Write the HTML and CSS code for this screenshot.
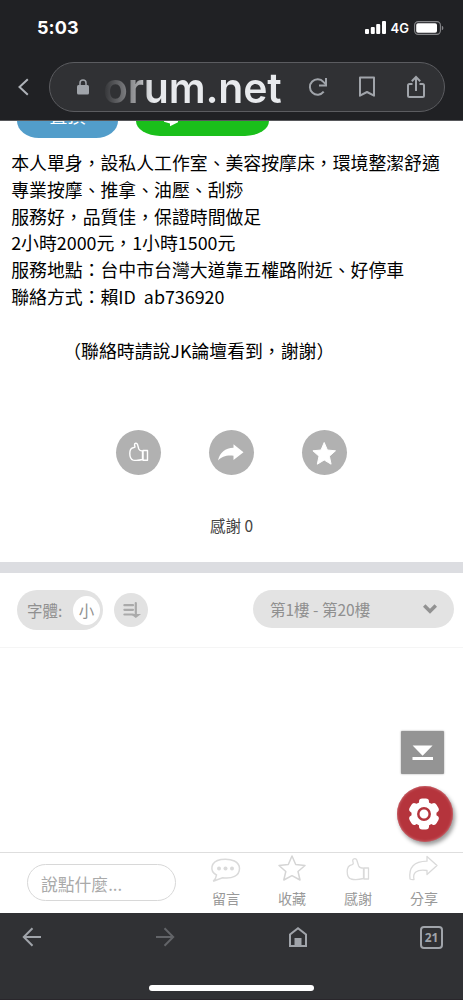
FILE: index.html
```html
<!DOCTYPE html>
<html lang="zh-Hant">
<head>
<meta charset="utf-8">
<meta name="viewport" content="width=device-width, initial-scale=1">
<title>JK論壇</title>
<link rel="stylesheet" href="styles.css">
</head>
<body>
<div class="phone">
  <header class="top">
    <div class="status">
      <span class="time">5:03</span>
      <svg class="signal" width="21" height="13" viewBox="0 0 21 13" fill="#fff"><rect x="0" y="8" width="4" height="5" rx="1"/><rect x="5.8" y="6" width="4" height="7" rx="1"/><rect x="11.2" y="3" width="4" height="10" rx="1"/><rect x="17" y="0" width="4" height="13" rx="1"/></svg>
      <span class="net">4G</span>
      <svg class="battery" width="30" height="14" viewBox="0 0 30 14"><rect x=".6" y=".6" width="25.8" height="12.8" rx="3.6" fill="none" stroke="#86878a" stroke-width="1.1"/><rect x="2.2" y="2.2" width="20.8" height="9.6" rx="1.8" fill="#fff"/><path d="M27.8 4.8q1.600.5 1.600 2.200t-1.600 2.200z" fill="#86878a"/></svg>
    </div>
    <div class="address-row">
      <svg class="chevron" width="12" height="18" viewBox="0 0 12 18"><path d="M9.800 1.200 1.500 9l8.300 7.800" fill="none" stroke="#aeb2b8" stroke-width="2"/></svg>
      <div class="address">
        <svg class="lock" width="12" height="16" viewBox="0 0 12 16"><rect x="0" y="6" width="12" height="9.600" rx="1.500" fill="#a0a4aa"/><path d="M3 7V4a3 3 0 0 1 6 0v3" fill="none" stroke="#a0a4aa" stroke-width="1.500"/></svg>
        <span class="host">orum.net</span>
        <svg class="reload" width="20" height="20" viewBox="0 0 20 20" fill="none" stroke="#a0a4aa" stroke-width="2"><path d="M15.700 14.700A7.700 7.700 0 1 1 15.400 4.900L17.800 7.200"/><path d="M18 1v7.500h-7"/></svg>
        <svg class="bookmark" width="18" height="22" viewBox="0 0 18 22"><path d="M2 1.500h14v18.200l-7-3.700-7 3.700z" fill="none" stroke="#a0a4aa" stroke-width="2" stroke-linejoin="round"/></svg>
        <svg class="share" width="18" height="24" viewBox="0 0 18 24" fill="none" stroke="#a0a4aa" stroke-width="2"><path d="M5.500 9H2.500Q1 9 1 10.500v10Q1 22 2.500 22h13q1.500 0 1.500-1.500v-10Q17 9 15.500 9h-3M9 16V2.500M4.800 6.200 9 2l4.200 4.200"/></svg>
      </div>
    </div>
  </header>

  <main class="page">
    <div class="buttons">
      <div class="btn blue"><span>置頂</span></div>
      <div class="btn green"><svg width="16" height="8" viewBox="0 0 16 8"><path d="M1 0h14v1.200L7 5.200V2.400L1 .8z" fill="#fff"/></svg></div>
    </div>
    <article class="post">
      <p>本人單身，設私人工作室、美容按摩床，環境整潔舒適</p>
      <p>專業按摩、推拿、油壓、刮痧</p>
      <p>服務好，品質佳，保證時間做足</p>
      <p>2小時2000元，1小時1500元</p>
      <p>服務地點：台中市台灣大道靠五權路附近、好停車</p>
      <p>聯絡方式：賴ID&nbsp; ab736920</p>
      <p>&nbsp;</p>
      <p class="note">（聯絡時請說JK論壇看到，謝謝）</p>
    </article>
    <div class="actions">
      <span class="round"><svg width="45" height="45" viewBox="0 0 45 45" fill="none" stroke="#fff" stroke-width="1.400" stroke-linejoin="round"><path d="M26.500 29.500c-4 1-7 1-9.300.6-3-.8-3.400-3-3.400-6.600 0-3.500.8-5.200 3.200-5.700l2-.8-.5-2c-.2-2.200 2.400-2.400 3-.6l1.300 4.600q.8 2 3.700 2z"/><path d="M27 20.500h4.500v9.700H27z"/></svg></span>
      <span class="round"><svg width="45" height="45" viewBox="0 0 45 45"><path d="M9 30.500C11 22.500 16 18 24.500 17.800V14.300L34.500 22.300 24.500 30V25.800C17 25 13 27 9 30.500z" fill="#fff"/></svg></span>
      <span class="round"><svg width="45" height="45" viewBox="0 0 45 45"><path d="m22.200 12.500 3.200 7.500 8.100.8-6.100 5.400 1.700 8-6.900-4.200-6.900 4.200 1.700-8-6.100-5.400 8.100-.8z" fill="#fff" stroke="#fff" stroke-linejoin="round"/></svg></span>
    </div>
    <div class="thanks">感謝 0</div>
    <div class="divider"></div>
    <div class="tools">
      <div class="font-size"><span>字體:</span><b>小</b></div>
      <div class="sort"><svg width="34" height="34" viewBox="0 0 34 34" stroke="#aaa" stroke-width="2.200" stroke-linecap="round" fill="none"><path d="M10.400 12.200h8.600M10.400 16.800h8.600M10.400 21.500h8.600M21.800 10v12"/><path d="M19.800 22.200h4l-2 1.500z"/></svg></div>
      <div class="range"><span>第1樓 - 第20樓</span><svg width="14" height="10" viewBox="0 0 14 10"><path d="m1.200 1.600 5.800 5.700 5.800-5.700" fill="none" stroke="#929292" stroke-width="3.500"/></svg></div>
    </div>
    <div class="floating">
      <div class="to-bottom"><svg width="43" height="43" viewBox="0 0 43 43" fill="#fff"><path d="M11.600 14.500h20L21.600 24.700zM11.500 26h20.500v3H11.500z"/></svg></div>
      <div class="gear"><svg width="56" height="56" viewBox="0 0 56 56"><g fill="#fff"><circle cx="27" cy="28" r="12.500"/><rect x="22" y="12.500" width="10" height="31" rx="3.200"/><rect x="22" y="12.500" width="10" height="31" rx="3.200" transform="rotate(60 27 28)"/><rect x="22" y="12.500" width="10" height="31" rx="3.200" transform="rotate(120 27 28)"/></g><circle cx="27" cy="28" r="5.700" fill="#fff" stroke="#b5343c" stroke-width="2.500"/></svg></div>
    </div>
  </main>

  <div class="reply-bar">
    <div class="input">說點什麼...</div>
    <div class="item"><svg width="34" height="30" viewBox="0 0 34 30" fill="none" stroke="#dadada" stroke-width="1.500"><path d="M7.500 22C.5 18.500 1 8.500 12 6.500c11-1.500 18.500 2.500 18.500 9 0 7.500-7.500 10.500-17 9.200l-9.300 3.500q3-2.700 3.300-6.200z"/><g fill="#dadada" stroke="none"><circle cx="10" cy="15.500" r="2"/><circle cx="16.500" cy="15.500" r="2"/><circle cx="23" cy="15.500" r="2"/></g></svg><span>留言</span></div>
    <div class="item"><svg width="34" height="30" viewBox="0 0 34 30" fill="none" stroke="#d5d5d5" stroke-width="1.500" stroke-linejoin="round"><path d="m17 3 3.700 8.500 9.300 1-7 6 2 8.500-8-4.300L8.800 27l2-8.500-6.800-6 9.300-1z"/></svg><span>收藏</span></div>
    <div class="item"><svg width="34" height="30" viewBox="0 0 34 30" fill="none" stroke="#dadada" stroke-width="1.300" stroke-linejoin="round"><path d="M22.500 25.500c-6 1.500-9.500 1.300-12.500.5-3.300-1-3.800-3.500-3.800-7.500 0-4.200 1-6 4.300-6.700q2.400-.8 1.600-2.500-1.100-3 1-3.500c2-.5 2.700.7 3.200 3l1.400 4.200q1 2.200 4.800 2.200z"/><path d="M23 15h4.500v11H23z"/></svg><span>感謝</span></div>
    <div class="item"><svg width="34" height="30" viewBox="0 0 34 30" fill="none" stroke="#dadada" stroke-width="1.300" stroke-linejoin="round"><path d="M3 26C1.500 14 7 8.500 20 8.200V3.500l10 9-10 9V17.500C9 16 5.500 20 7 26.500q-2 .5-4-.5z"/></svg><span>分享</span></div>
  </div>

  <nav class="bottom">
    <div class="nav-icons">
      <svg width="20" height="20" viewBox="0 0 20 20" fill="none" stroke="#a0a4aa" stroke-width="2"><path d="M19 10H2M10.500 1.300 1.800 10l8.700 8.700"/></svg>
      <svg width="20" height="20" viewBox="0 0 20 20" fill="none" stroke="#626468" stroke-width="2"><path d="M1 10h17M9.500 1.300l8.700 8.700-8.700 8.700"/></svg>
      <svg class="home" width="20" height="22" viewBox="0 0 20 22"><path d="M2 20V8.500l8-6.300 8 6.300V20z" fill="none" stroke="#a0a4aa" stroke-width="2"/><path d="M6.500 12h7v9h-7z" fill="#a0a4aa"/></svg>
      <div class="tabs">21</div>
    </div>
    <div class="home-indicator"></div>
  </nav>
</div>
</body>
</html>
```
FILE: styles.css
```css
* { box-sizing: border-box; }
body { margin: 0; background: #fff; font-family: "Noto Sans CJK TC", sans-serif; }
p { margin: 0; }
svg { display: block; flex: none; }
.phone { width: 463px; height: 1000px; display: flex; flex-direction: column; overflow: hidden; }

.top { height: 121px; flex: none; background: #202124; border-bottom: 1px solid #57585b; }
.status { height: 62px; display: flex; align-items: center; padding: 5px 19px 12px 37px; color: #fff; font-family: Inter, sans-serif; }
.time { font-size: 18px; font-weight: 700; margin-right: auto; letter-spacing: .1px; }
.net { font-size: 13px; font-weight: 600; margin: 1px 5px 0 5px; }
.address-row { display: flex; align-items: center; padding: 0 18px 0 18px; }
.chevron { margin-right: 19px; }
.address { width: 396px; height: 50px; border: 1px solid #5b5c60; border-radius: 25px; background: #303134; display: flex; align-items: center; padding-left: 27px; }
.lock { margin-right: 14px; }
.host { width: 180px; padding-top: 2px; font: 600 41px/48px Inter, sans-serif; letter-spacing: -.2px; white-space: nowrap; color: transparent; background: linear-gradient(90deg, #303134 0, #a2a3a6 35px, #e8eaed 50px); background-clip: text; -webkit-background-clip: text; }
.reload { margin-left: 25px; }
.bookmark { margin-left: 30px; }
.share { margin-left: 31px; }

.page { position: relative; height: 731px; flex: none; display: flex; flex-direction: column; }
.buttons { height: 28px; flex: none; display: flex; align-items: flex-start; gap: 18px; padding-left: 17px; }
.btn { overflow: hidden; }
.blue { width: 101px; height: 17px; background: #529dca; border-radius: 0 0 22px 22px / 0 0 17px 17px; color: #fff; text-align: center; font-size: 18px; line-height: 18px; }
.blue span { display: block; margin-top: -15px; }
.green { width: 133px; height: 15px; background: #1abf1b; border-radius: 0 0 24px 24px / 0 0 15px 15px; padding-left: 27px; }
.post { padding-left: 11.200px; font-size: 17.880px; line-height: 26.800px; color: #000; white-space: nowrap; }
.note { padding-left: 52px; }
.actions { display: flex; gap: 48px; padding: 67px 0 0 116px; }
.round { width: 45px; height: 45px; border-radius: 50%; background: #b1b1b1; }
.thanks { margin: 38px 0 25px; height: 24px; font-size: 15.500px; line-height: 24px; text-align: center; color: #444; }
.divider { height: 11px; flex: none; background: #dcdde1; }
.tools { height: 75px; flex: none; border-bottom: 1px solid #f5f5f5; display: flex; align-items: center; padding-left: 17px; color: #909090; }
.font-size { width: 86px; height: 40px; border-radius: 20px; background: #e2e2e2; display: flex; align-items: center; padding: 0 3px 0 10px; justify-content: space-between; font-size: 15.500px; }
.font-size b { width: 27px; height: 29px; border-radius: 50%; background: #fff; font-weight: 400; line-height: 28px; text-align: center; }
.sort { width: 34px; height: 34px; margin-left: 11px; border-radius: 50%; background: #e2e2e2; }
.range { width: 201px; height: 38px; margin-left: 105px; margin-top: -2px; border-radius: 19px; background: #e3e3e3; display: flex; align-items: center; justify-content: space-between; padding: 0 17px; font-size: 15.500px; }
.floating { position: absolute; right: 10px; top: 610px; display: flex; flex-direction: column; align-items: flex-end; }
.to-bottom { width: 43px; height: 43px; margin-right: 9px; background: #949494; border-radius: 1px; box-shadow: 0 0 2px #999; }
.gear { width: 56px; height: 56px; margin-top: 12px; border-radius: 50%; background: #b5343c; box-shadow: 2px 3px 4px #999, inset 0 0 3px #d78a90; }

.reply-bar { height: 61px; flex: none; border-top: 1px solid #dedede; background: #fff; display: flex; padding-left: 27px; }
.input { width: 149px; height: 37px; margin: 11px 17px 0 0; border: 1px solid #d8d8d8; border-radius: 18.500px; padding: 3px 13px; color: #aaa; font-size: 16.800px; line-height: 33px; }
.item { width: 66px; display: flex; flex-direction: column; align-items: center; font-size: 14px; line-height: 22px; color: #999; }
.item span { margin-top: 4px; }

.bottom { height: 87px; flex: none; background: #303134; display: flex; flex-direction: column; align-items: center; border-bottom: 1px solid #29262b; }
.nav-icons { width: 463px; height: 48px; display: flex; align-items: center; justify-content: space-between; padding: 0 20px 0 22px; }
.home { margin-right: -1px; }
.tabs { width: 23px; height: 23px; border: 2px solid #a0a4aa; border-radius: 4px; color: #a0a4aa; font: 700 12px/19px "Noto Sans", sans-serif; text-align: center; }
.home-indicator { width: 165px; height: 6px; margin-top: 24px; border-radius: 3px; background: #fff; }
```
